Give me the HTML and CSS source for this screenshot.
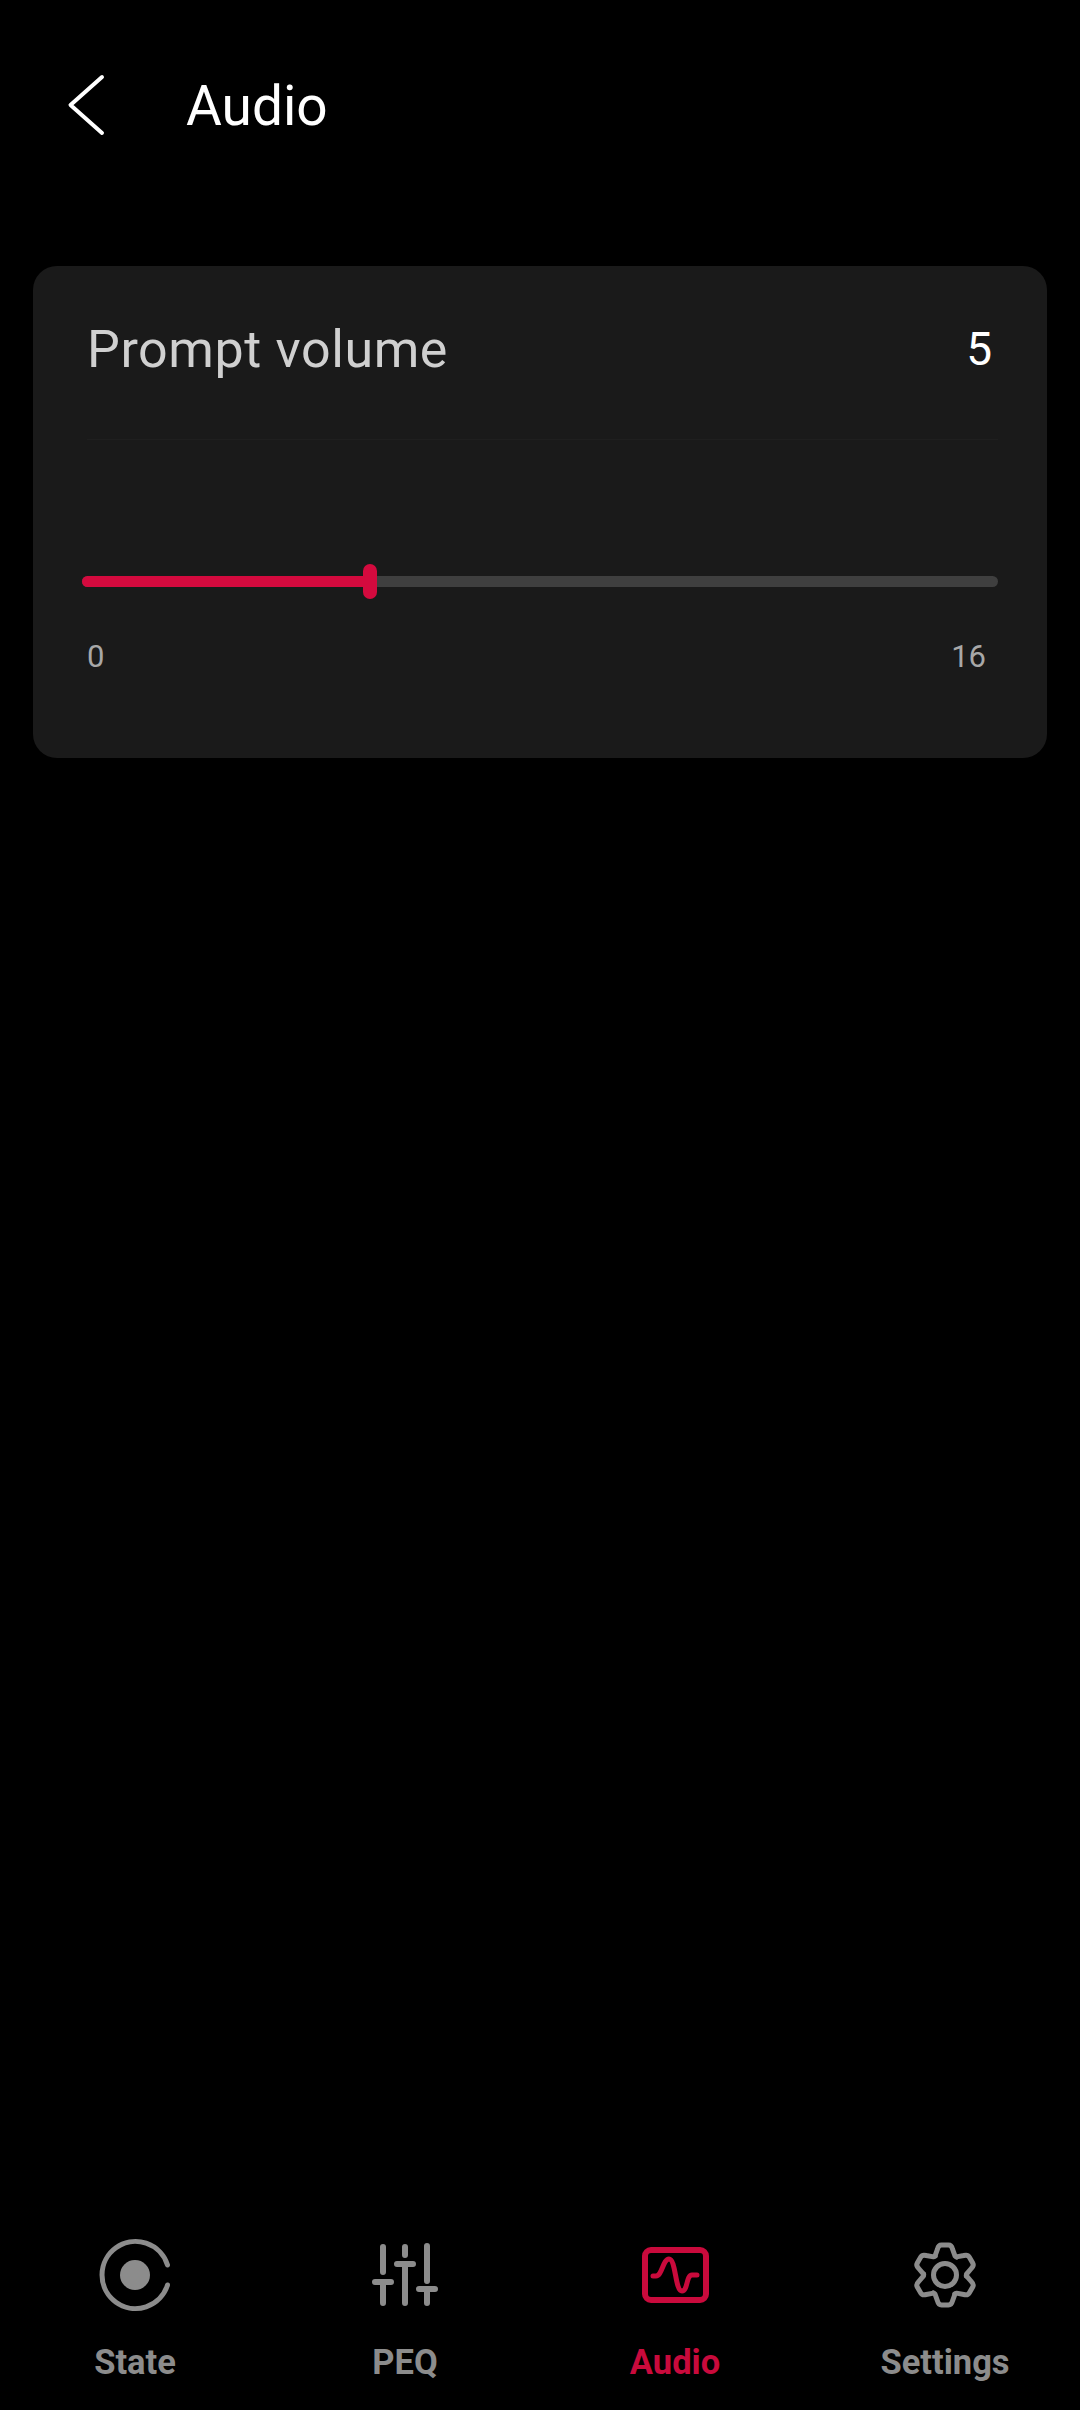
FILE: index.html
```html
<!DOCTYPE html>
<html>
<head>
    <title>Audio</title>
    <link rel="stylesheet" href="styles.css">
</head>
<body>

<div class="app">
    <header class="topbar">
        <svg class="back" width="60" height="80" viewBox="0 0 60 80">
            <path d="M42 12 L10.5 40 L42 68" />
        </svg>
        <h1 class="title">Audio</h1>
    </header>

    <section class="card">
        <div class="card-head">
            <span class="card-name">Prompt volume</span>
            <span class="card-value">5</span>
        </div>
        <div class="slider">
            <div class="track">
                <div class="fill" style="width: 31.25%">
                    <div class="thumb"></div>
                </div>
            </div>
            <div class="limits">
                <span>0</span>
                <span>16</span>
            </div>
        </div>
    </section>

    <nav class="tabs">
        <div class="tab">
            <svg width="80" height="80" viewBox="0 0 80 80">
                <path class="line" d="M72.5 30 A33.5 33.5 0 1 0 72.5 50" />
                <circle class="dot" cx="40" cy="40" r="15" />
            </svg>
            <span>State</span>
        </div>
        <div class="tab">
            <svg width="80" height="80" viewBox="0 0 80 80">
                <path class="line thick" d="M18 12 V37 M10 47 H26 M18 47 V68" />
                <path class="line thick" d="M40 12 V20 M32 29 H48 M40 29 V68" />
                <path class="line thick" d="M62 11 V46 M54 54 H70 M62 54 V68" />
            </svg>
            <span>PEQ</span>
        </div>
        <div class="tab active">
            <svg width="80" height="80" viewBox="0 0 80 80">
                <rect class="line thick" x="10" y="15" width="61" height="50" rx="6" />
                <path class="line" d="M18 41 H21 C27 41 28 24 34 24 C41 24 40 56 47 56 C53 56 51 40 57 40 H62" />
            </svg>
            <span>Audio</span>
        </div>
        <div class="tab">
            <svg width="80" height="80" viewBox="-40 -40 80 80">
                <g class="line">
                    <path id="tooth" d="M-10 -19 L-7.5 -26 Q-6.5 -30 -3.5 -30 H3.5 Q6.5 -30 7.5 -26 L10 -19 L11.5 -18" />
                    <use href="#tooth" transform="rotate(60)" />
                    <use href="#tooth" transform="rotate(120)" />
                    <use href="#tooth" transform="rotate(180)" />
                    <use href="#tooth" transform="rotate(240)" />
                    <use href="#tooth" transform="rotate(300)" />
                </g>
                <circle class="line" cx="0" cy="0" r="11.5" />
            </svg>
            <span>Settings</span>
        </div>
    </nav>
</div>

</body>
</html>
```

FILE: styles.css
```css
body {
    margin: 0;
    background: #000;
    font-family: Roboto, "Noto Sans", sans-serif;
}

.app {
    display: flex;
    flex-direction: column;
    height: 2410px;
}

.topbar {
    display: flex;
    align-items: center;
    height: 210px;
    padding-left: 60px;
}

.back {
    margin-right: 66px;
}

.back path {
    fill: none;
    stroke: #fff;
    stroke-width: 4;
    stroke-linecap: round;
    stroke-linejoin: round;
}

.title {
    margin: 2px 0 0;
    color: #fff;
    font-size: 55px;
    font-weight: 400;
}

.card {
    margin: 56px 33px 0;
    height: 492px;
    background: #1a1a1a;
    border-radius: 24px;
}

.card-head {
    display: flex;
    justify-content: space-between;
    align-items: center;
    height: 167px;
    padding-bottom: 6px;
    margin: 0 49px 0 54px;
    padding-right: 6px;
    border-bottom: 1px solid #1f1f1f;
}

.card-name {
    color: #d0d0d0;
    font-size: 52px;
    letter-spacing: 0.6px;
}

.card-value {
    margin-bottom: 2px;
    color: #fff;
    font-size: 46px;
}

.slider {
    margin: 136px 49px 0;
}

.track {
    height: 11px;
    background: #3f3f3f;
    border-radius: 6px;
}

.fill {
    position: relative;
    height: 100%;
    background: #d40a3e;
    border-radius: 6px;
}

.thumb {
    position: absolute;
    right: -9px;
    top: -12px;
    width: 14px;
    height: 35px;
    background: #d40a3e;
    border-radius: 7px;
}

.limits {
    display: flex;
    justify-content: space-between;
    margin-top: 52px;
    padding: 0 12px 0 5px;
    color: #a8a8a8;
    font-size: 31px;
    line-height: 36px;
}

.tabs {
    display: grid;
    grid-template-columns: repeat(4, 1fr);
    margin-top: auto;
    padding-bottom: 28px;
}

.tab {
    display: flex;
    flex-direction: column;
    align-items: center;
    gap: 27px;
    color: #8c8c8c;
    font-size: 34.5px;
    font-weight: 700;
    line-height: 40px;
}

.tab.active {
    color: #c90a3c;
}

.line {
    fill: none;
    stroke: currentColor;
    stroke-width: 5;
    stroke-linecap: round;
    stroke-linejoin: round;
}

.line.thick {
    stroke-width: 6;
}

.dot {
    fill: currentColor;
}
```
